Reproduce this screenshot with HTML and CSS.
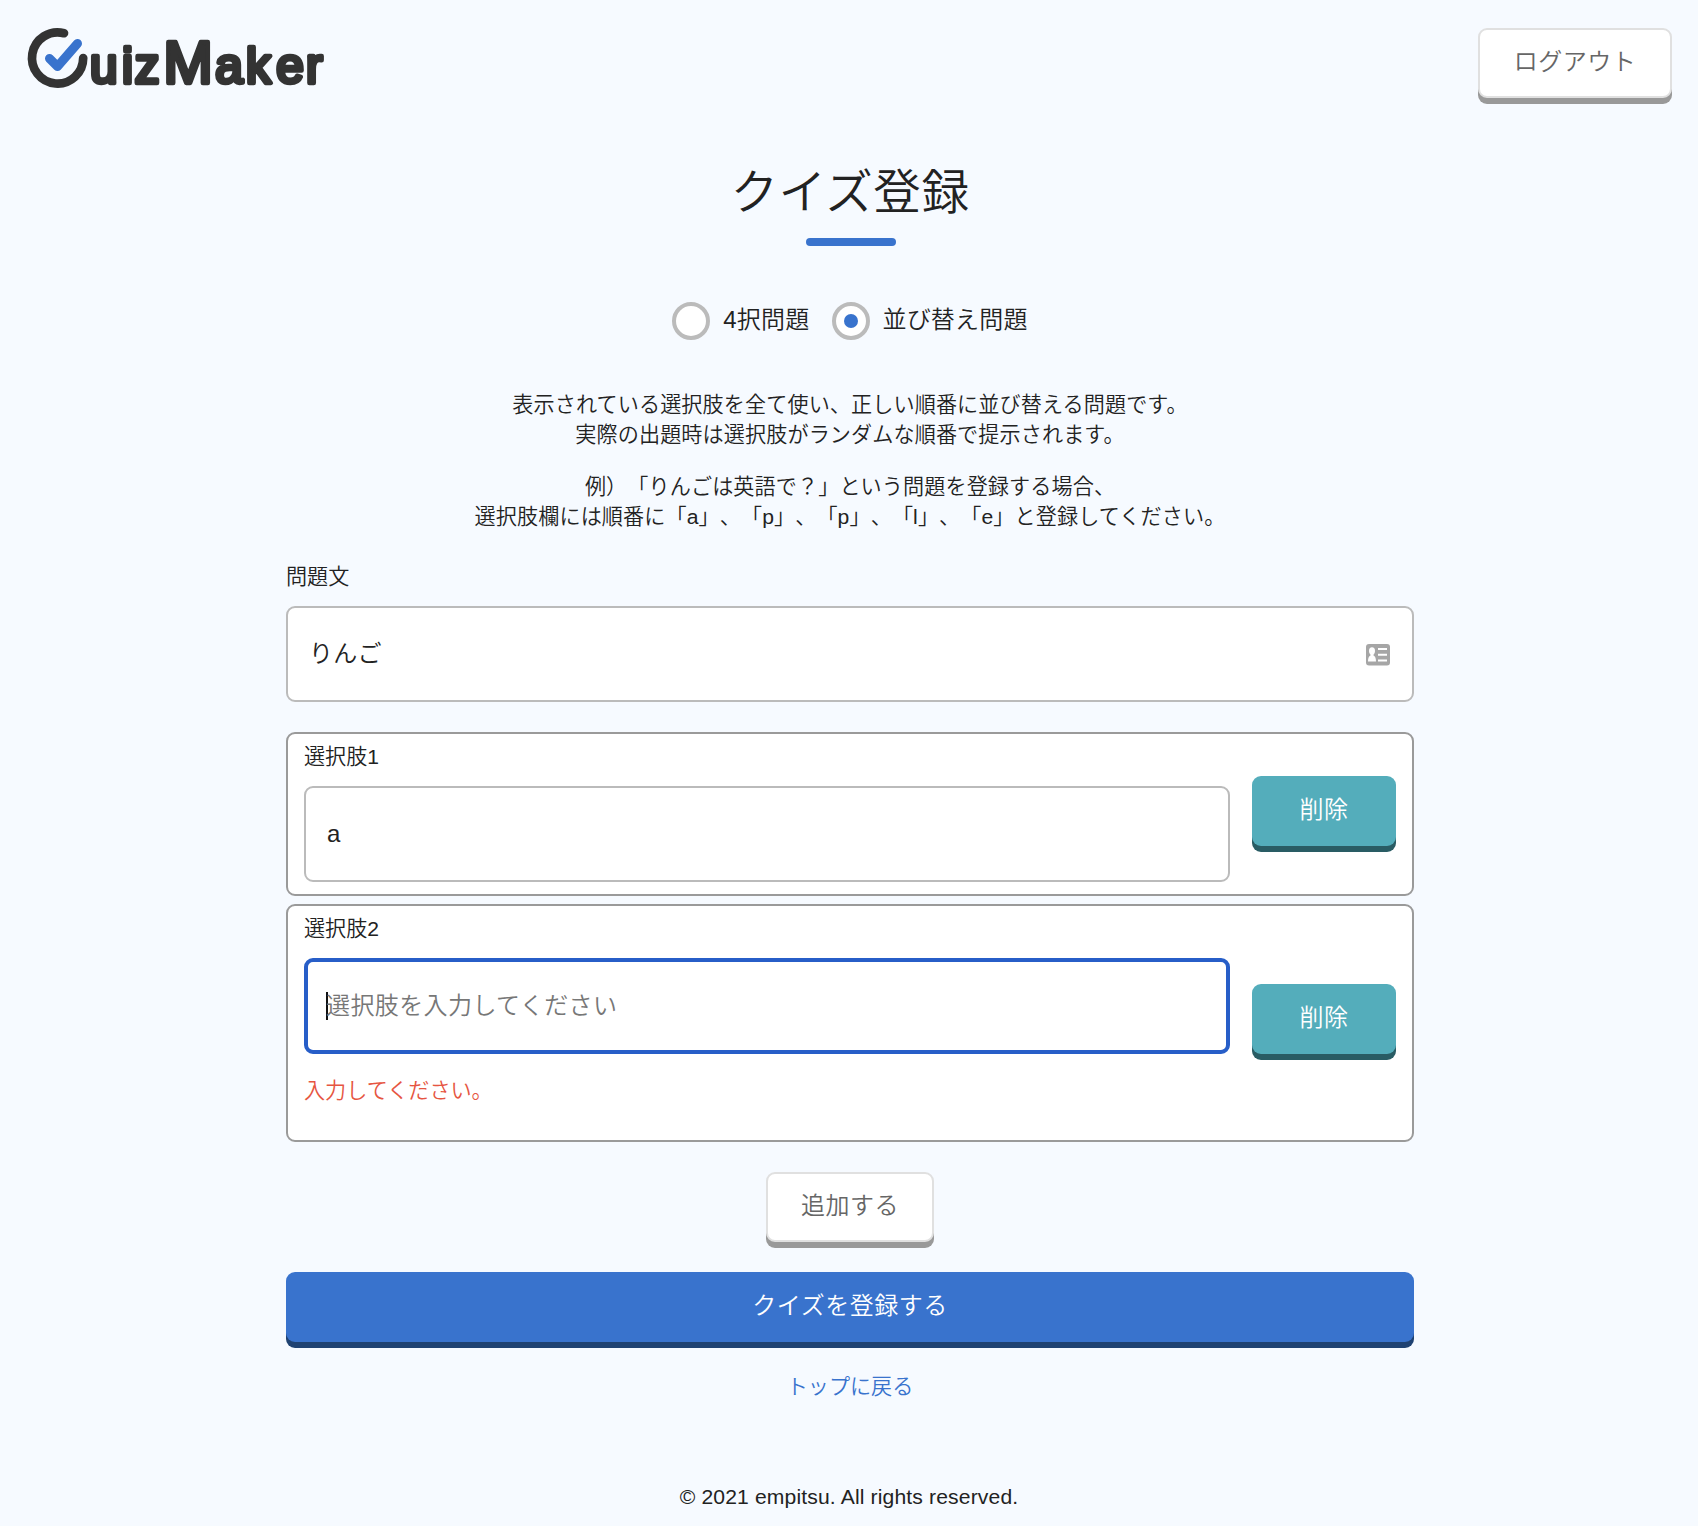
FILE: index.html
```html
<!DOCTYPE html>
<html lang="ja">
<head>
<meta charset="utf-8">
<title>クイズ登録 | QuizMaker</title>
<link rel="stylesheet" href="styles.css">
</head>
<body>
<header class="header">
  <svg class="logo" viewBox="0 0 302 62" width="302" height="62" role="img" aria-label="QuizMaker">
    <path class="logo-ring" d="M36 5.2A25.6 25.6 0 1 0 55.2 30"/>
    <path class="logo-check" d="M21.500 30.500L29.500 38.500L49.500 15.500"/>
    <text class="logo-text" y="54.500" x="62 94 106.700 135.500 187.200 218 248.200 278">uiz<tspan class="logo-cap">M</tspan>aker</text>
  </svg>
  <button class="btn btn-plain btn-logout">ログアウト</button>
</header>
<main class="main">
  <h1 class="title">クイズ登録</h1>
  <div class="types">
    <label class="type"><span class="radio"></span><span class="type-name">4択問題</span></label>
    <label class="type"><span class="radio radio-on"></span><span class="type-name">並び替え問題</span></label>
  </div>
  <p class="lead">表示されている選択肢を全て使い、正しい順番に並び替える問題です。<br>実際の出題時は選択肢がランダムな順番で提示されます。</p>
  <p class="lead">例）「りんごは英語で？」という問題を登録する場合、<br>選択肢欄には順番に「a」、「p」、「p」、「l」、「e」と登録してください。</p>
  <div class="label label-question">問題文</div>
  <div class="input">
    <span class="value">りんご</span>
    <svg class="card-icon" viewBox="0 0 24 22" width="24" height="22">
      <rect width="24" height="21.500" rx="3" fill="#a6a6a6"/>
      <g fill="#fff">
        <ellipse cx="6" cy="7" rx="3" ry="3.700"/>
        <path d="M4.500 9.500h3v2c1.700.8 2.500 2.700 2.500 6H2c0-3.300.8-5.200 2.500-6z"/>
        <path d="M12 4h9v2h-9zM12 9.700h9v2h-9zM12 15.500h9v2h-9z"/>
      </g>
    </svg>
  </div>
  <section class="choice choice-first">
    <div class="field">
      <div class="label">選択肢1</div>
      <div class="input"><span class="value">a</span></div>
    </div>
    <button class="btn btn-delete">削除</button>
  </section>
  <section class="choice choice-error">
    <div class="field">
      <div class="label">選択肢2</div>
      <div class="input input-focus"><span class="caret"></span><span class="placeholder">選択肢を入力してください</span></div>
      <p class="error">入力してください。</p>
    </div>
    <button class="btn btn-delete">削除</button>
  </section>
  <button class="btn btn-plain btn-add">追加する</button>
  <button class="btn btn-submit">クイズを登録する</button>
  <a class="back">トップに戻る</a>
</main>
<footer class="footer">© 2021 empitsu. All rights reserved.</footer>
</body>
</html>
```

FILE: styles.css
```css
* { box-sizing: border-box; }
body {
  margin: 0;
  height: 1526px;
  background: #f6faff;
  color: #222;
  font-family: "Liberation Sans", "Noto Sans CJK JP", sans-serif;
  font-weight: 350;
  font-size: 21.12px;
  line-height: 30px;
  text-spacing-trim: space-all;
}
.header {
  display: flex;
  justify-content: space-between;
  align-items: flex-start;
  height: 132px;
  padding: 28px 26px 0 28px;
}
.logo { display: block; overflow: visible; }
.logo-ring { fill: none; stroke: #333; stroke-width: 8.7px; stroke-linecap: round; }
.logo-check { fill: none; stroke: #3973cd; stroke-width: 9px; stroke-linecap: round; stroke-linejoin: round; }
.logo-text {
  font-family: "Liberation Sans", sans-serif;
  font-size: 49.5px;
  font-weight: 400;
  fill: #333;
  stroke: #333;
  stroke-width: 4.5px;
  stroke-linejoin: round;
}
.logo-cap { font-size: 59px; }
.btn {
  display: block;
  height: 70px;
  padding: 0 0 4px;
  border: 0;
  border-radius: 9px;
  font: inherit;
  font-size: 24px;
  line-height: 31px;
  letter-spacing: .5px;
  color: #fff;
}
.btn-plain { background: #fff; border: 2px solid #e0e0e0; box-shadow: 0 6px 0 #999; color: #666; }
.btn-logout { width: 194px; }
.btn-delete { width: 144px; background: #54adbb; box-shadow: 0 6px 0 #295c64; }
.btn-add { width: 168px; margin: 30px auto 0; }
.btn-submit { width: 100%; margin-top: 30px; background: #3973cd; box-shadow: 0 6px 0 #1f4272; }
.main { width: 1128px; margin: 0 auto; position: relative; left: 1px; }
.title {
  display: flex;
  flex-direction: column;
  align-items: center;
  margin: 0;
  height: 114px;
  padding-top: 26px;
  font-size: 47.6px;
  font-weight: 350;
  line-height: 70px;
  letter-spacing: .5px;
}
.title::after { content: ""; width: 90px; height: 8px; margin-top: 10px; margin-left: 2px; border-radius: 4px; background: #3973cd; }
.types { display: flex; justify-content: center; gap: 23px; margin-top: 56px; height: 38px; }
.type { display: flex; gap: 13px; font-size: 24px; line-height: 36px; letter-spacing: .2px; }
.type + .type { gap: 12px; }
.radio {
  display: flex;
  align-items: center;
  justify-content: center;
  width: 38px;
  height: 38px;
  border: 4px solid #bbb;
  border-radius: 50%;
  background: #fff;
}
.radio-on::after { content: ""; width: 14px; height: 14px; border-radius: 50%; background: #3973cd; }
.lead { margin: 0 0 22px; text-align: center; white-space: nowrap; letter-spacing: .1px; }
.types + .lead { margin-top: 50px; }
.label { height: 30px; }
.label-question { margin-top: 30px; }
.input {
  display: flex;
  align-items: center;
  height: 96px;
  margin-top: 14px;
  padding: 0 22px 1px 21px;
  border: 2px solid #bbb;
  border-radius: 9px;
  background: #fff;
  font-size: 24px;
  letter-spacing: .3px;
}
.input-focus { border: 4px solid #275ec8; padding: 0 18px 1px; }
.value { flex: 1; }
.card-icon { margin-top: 2px; }
.caret { width: 2px; height: 28px; margin-top: 1px; margin-right: -2px; background: #111; }
.placeholder { color: #777; letter-spacing: .4px; }
.choice {
  display: flex;
  align-items: center;
  gap: 22px;
  height: 164px;
  padding: 0 16px;
  border: 2px solid #9a9a9a;
  border-radius: 9px;
  background: #fff;
}
.choice-first { margin-top: 30px; }
.choice-error { height: 238px; margin-top: 8px; }
.field { flex: 1; align-self: flex-start; padding-top: 8px; }
.choice .btn-delete { margin-bottom: 6px; }
.choice-error .btn-delete { margin-bottom: 8px; }
.error { margin: 22px 0 0; color: #e65541; }
.back { display: block; width: fit-content; margin: 30px auto 0; color: #3973cd; }
.footer { margin-top: 80px; text-align: center; font-size: 21.120px; letter-spacing: .14px; }
```
